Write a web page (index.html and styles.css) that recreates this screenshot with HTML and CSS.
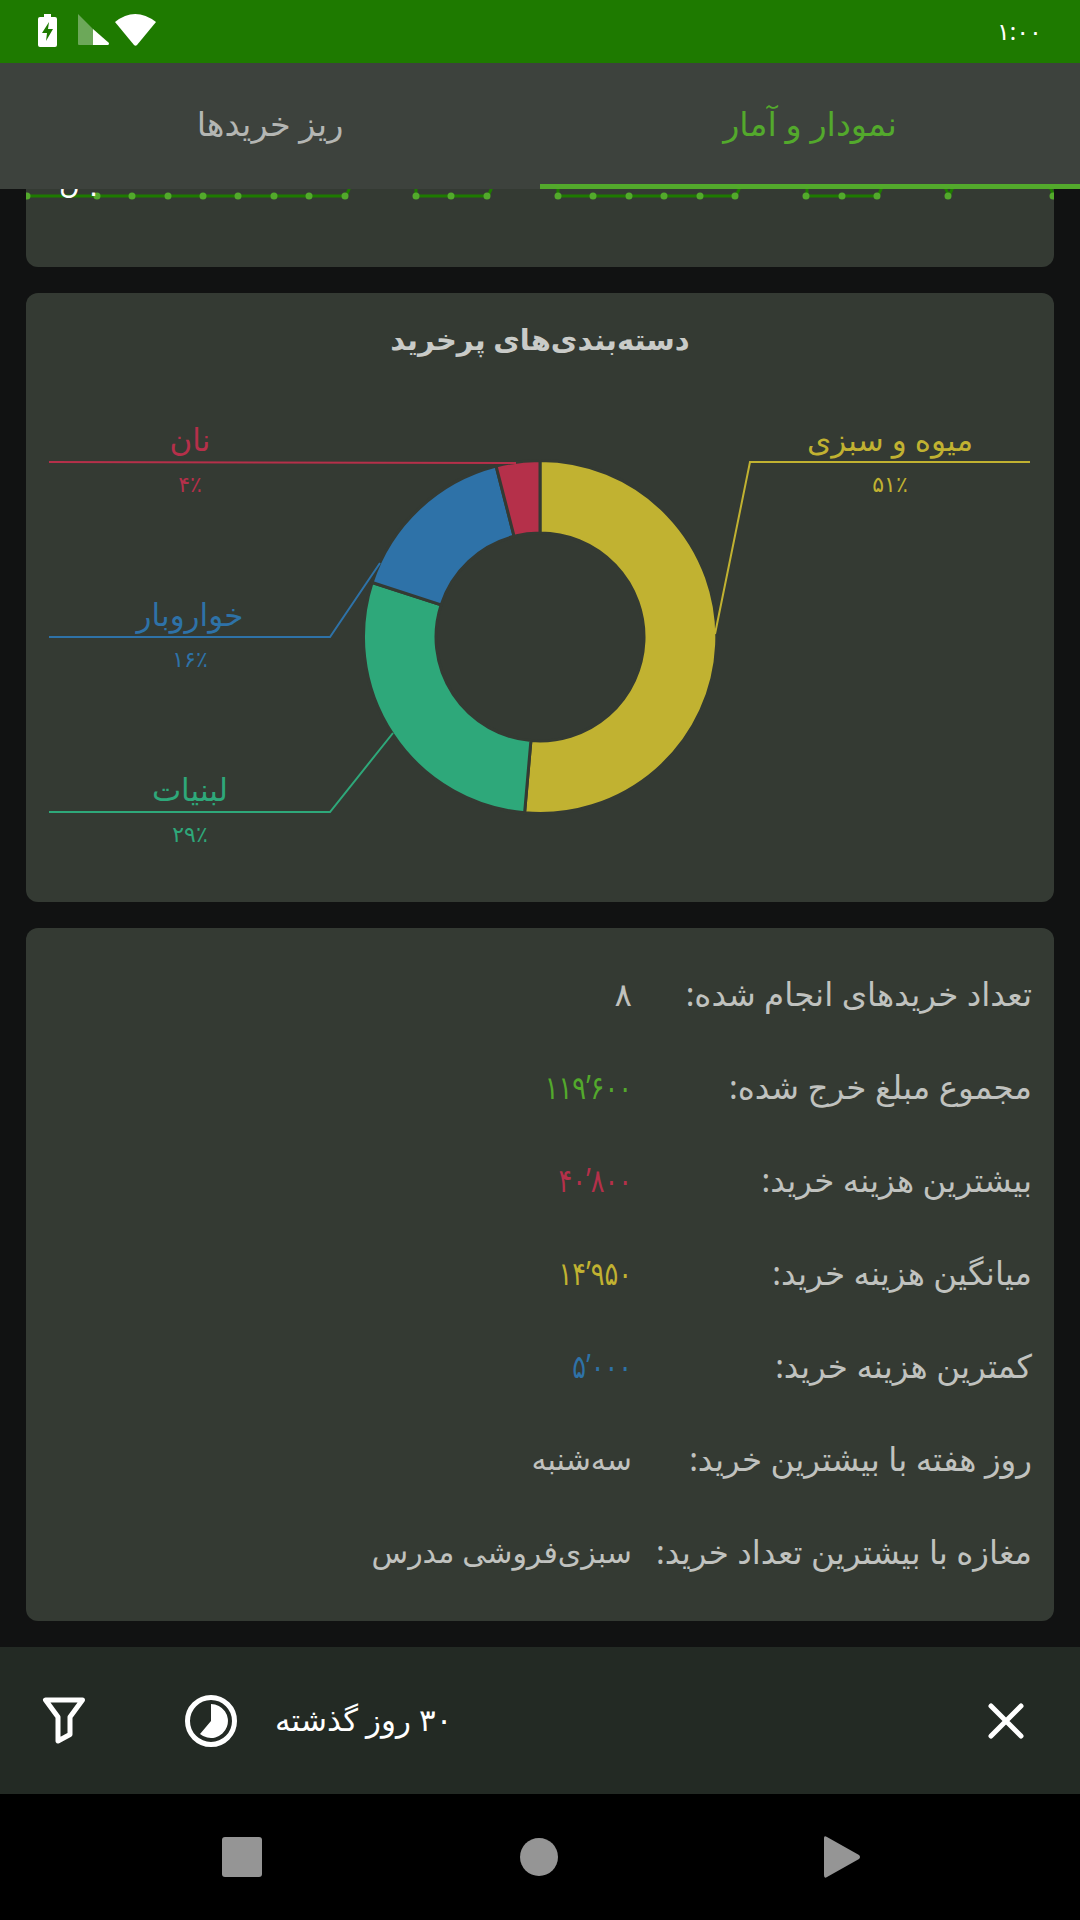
FILE: index.html
```html
<!DOCTYPE html>
<html lang="fa">

<head>
    <meta charset="UTF-8">
    <title>نمودار و آمار</title>
    <link rel="stylesheet" href="styles.css">
</head>

<body>
    <div class="status">
        <div class="status-icons">
            <svg width="19" height="33" viewBox="0 0 19 33">
                <path fill="#fff" d="M6 0h7v3h4q2 0 2 2v26q0 2-2 2H2q-2 0-2-2V5q0-2 2-2h4z" />
                <path fill="#1e7a00" d="M11 8 4 19h5l-1 8 7-12h-5z" />
            </svg>
            <svg width="31" height="31" viewBox="0 0 31 31">
                <path fill="#fff" opacity=".35" d="M0 0 15 15V31H1q-1 0-1-1z" />
                <path fill="#fff" d="M15 15 31 29q0 2-1 2H15z" />
            </svg>
            <svg width="41" height="32" viewBox="0 0 41 32">
                <path fill="#fff" d="M0 8Q20-8 41 8L22 31q-1.500 1.500-3 0z" />
            </svg>
        </div>
        <span class="clock">۱:۰۰</span>
    </div>

    <div class="tabs">
        <div class="tab">ریز خریدها</div>
        <div class="tab tab-on">نمودار و آمار</div>
    </div>

    <div class="main">
        <div class="card card-top">
            <svg class="trend" width="1028" height="20" viewBox="0 0 1028 20">
                <path class="trend-line" d="M0 7H320M320 7 325-4M390-4 390 7H462L462 7 467-4M532-4 532 7H710L715-4M781-4 781 7H852L857-4M918-4 923 7 928-4M1023-4 1028 7" />
                <g class="trend-dots">
                    <circle cx="1" cy="7" r="3.500" /><circle cx="71" cy="7" r="3.500" /><circle cx="106" cy="7" r="3.500" />
                    <circle cx="142" cy="7" r="3.500" /><circle cx="177" cy="7" r="3.500" /><circle cx="212" cy="7" r="3.500" />
                    <circle cx="248" cy="7" r="3.500" /><circle cx="283" cy="7" r="3.500" /><circle cx="319" cy="7" r="3.500" />
                    <circle cx="390" cy="7" r="3.500" /><circle cx="425" cy="7" r="3.500" /><circle cx="461" cy="7" r="3.500" />
                    <circle cx="532" cy="7" r="3.500" /><circle cx="567" cy="7" r="3.500" /><circle cx="603" cy="7" r="3.500" />
                    <circle cx="638" cy="7" r="3.500" /><circle cx="674" cy="7" r="3.500" /><circle cx="709" cy="7" r="3.500" />
                    <circle cx="780" cy="7" r="3.500" /><circle cx="816" cy="7" r="3.500" /><circle cx="851" cy="7" r="3.500" />
                    <circle cx="922" cy="7" r="3.500" /><circle cx="1027" cy="7" r="3.500" />
                </g>
                <text class="trend-label" x="33" y="4">ن</text>
                <text class="trend-label" x="60" y="13">۰</text>
            </svg>
        </div>

        <div class="card card-chart">
            <h2 class="card-title">دسته‌بندی‌های پرخرید</h2>
            <svg class="donut" width="1028" height="530" viewBox="0 0 1028 530">
                <path class="slice yellow" d="M514 88.500A176.500 176.500 0 1 1 498.600 440.800L504.900 368.600A104 104 0 1 0 514 161Z" />
                <path class="slice green" d="M498.600 440.800A176.500 176.500 0 0 1 346.100 210.500L415.100 232.900A104 104 0 0 0 504.900 368.600Z" />
                <path class="slice blue" d="M346.100 210.500A176.500 176.500 0 0 1 470.100 94L488.100 164.300A104 104 0 0 0 415.100 232.900Z" />
                <path class="slice red" d="M470.100 94A176.500 176.500 0 0 1 514 88.500V161A104 104 0 0 0 488.100 164.300Z" />

                <path class="lead yellow-line" d="M1004 90H724L689 262" />
                <path class="lead red-line" d="M23 90 490 91" />
                <path class="lead blue-line" d="M23 265H304L354 191" />
                <path class="lead green-line" d="M23 440H304L367 361" />

                <text class="name yellow-text" x="864" y="79">میوه و سبزی</text>
                <text class="pct yellow-text" x="864" y="120">۵۱٪</text>
                <text class="name red-text" x="164" y="79">نان</text>
                <text class="pct red-text" x="164" y="120">۴٪</text>
                <text class="name blue-text" x="164" y="254">خواروبار</text>
                <text class="pct blue-text" x="164" y="295">۱۶٪</text>
                <text class="name green-text" x="164" y="429">لبنیات</text>
                <text class="pct green-text" x="164" y="470">۲۹٪</text>
            </svg>
        </div>

        <div class="card card-stats">
            <div class="row"><span>تعداد خریدهای انجام شده:</span><span>۸</span></div>
            <div class="row"><span>مجموع مبلغ خرج شده:</span><span class="num val-green">۱۱۹’۶۰۰</span></div>
            <div class="row"><span>بیشترین هزینه خرید:</span><span class="num val-red">۴۰’۸۰۰</span></div>
            <div class="row"><span>میانگین هزینه خرید:</span><span class="num val-yellow">۱۴’۹۵۰</span></div>
            <div class="row"><span>کمترین هزینه خرید:</span><span class="num val-blue">۵’۰۰۰</span></div>
            <div class="row"><span>روز هفته با بیشترین خرید:</span><span class="word">سه‌شنبه</span></div>
            <div class="row"><span>مغازه با بیشترین تعداد خرید:</span><span class="word">سبزی‌فروشی مدرس</span></div>
        </div>
    </div>

    <div class="filter-bar">
        <svg class="ic-filter" width="44" height="48" viewBox="0 0 44 48">
            <path d="M3.500 3H40.500L28 20V37.500L16 44V20Z" />
        </svg>
        <svg class="ic-range" width="52" height="52" viewBox="0 0 52 52">
            <circle cx="26" cy="26" r="23.500" fill="none" stroke="#fff" stroke-width="5" />
            <path fill="#fff" d="M26 9A17 17 0 1 1 15 39L26 26Z" />
        </svg>
        <span class="range-text">۳۰ روز گذشته</span>
        <svg class="ic-close" width="36" height="36" viewBox="0 0 36 36">
            <path d="M3 3 33 33M33 3 3 33" />
        </svg>
    </div>

    <div class="nav">
        <div class="nav-square"></div>
        <div class="nav-circle"></div>
        <svg class="nav-back" width="37" height="42" viewBox="0 0 37 42">
            <path fill="#959595" d="M0 2Q0-1 3 1L35 19q2 2 0 4L3 41q-3 2-3-2z" />
        </svg>
    </div>
</body>

</html>
```

FILE: styles.css
```css
* {
    box-sizing: border-box;
}

body {
    margin: 0;
    width: 1080px;
    height: 1920px;
    overflow: hidden;
    display: flex;
    flex-direction: column;
    background-color: #111212;
    font-family: "Noto Sans", "DejaVu Sans", sans-serif;
    color: #c9cbc8;
}

.status {
    height: 63px;
    padding: 14px 38px 0 38px;
    display: flex;
    justify-content: space-between;
    background-color: #1e7a00;
}

.status-icons {
    display: flex;
    align-items: flex-start;
    gap: 21px;
}

.status-icons svg + svg + svg {
    margin-left: -15px;
}

.clock {
    color: #fff;
    font-size: 24px;
    line-height: 34px;
}

.tabs {
    height: 126px;
    display: flex;
    background-color: #3d423d;
    position: relative;
    z-index: 2;
}

.tab {
    flex: 1;
    display: flex;
    align-items: center;
    justify-content: center;
    padding-bottom: 7px;
    font-size: 33.500px;
    color: #b4b6b3;
}

.tab-on {
    color: #53a92c;
    border-bottom: 5px solid #53a92c;
    padding-bottom: 2px;
}

.main {
    flex: 1;
    padding: 0 26px;
    display: flex;
    flex-direction: column;
    gap: 26px;
}

.card {
    width: 1028px;
    background-color: #343a33;
    border-radius: 12px;
}

.card-top {
    height: 78px;
    border-radius: 0 0 12px 12px;
    overflow: hidden;
}

.trend {
    display: block;
}

.trend-label {
    fill: #fff;
    font-size: 28px;
}

.trend-line {
    fill: none;
    stroke: #1e7a00;
    stroke-width: 3;
}

.trend-dots {
    fill: #53a92c;
}

.card-chart {
    height: 609px;
    direction: rtl;
}

.card-title {
    margin: 0;
    height: 79px;
    line-height: 92px;
    text-align: center;
    font-size: 29px;
    font-weight: bold;
    color: #c9cbc8;
}

.donut {
    display: block;
    direction: ltr;
}

.lead {
    fill: none;
    stroke-width: 2;
}

.slice {
    stroke: #343a33;
    stroke-width: 3;
}

.yellow { fill: #c1b231; }
.green { fill: #2ea87a; }
.blue { fill: #2e72a8; }
.red { fill: #b5304a; }

.yellow-line { stroke: #c1b231; }
.green-line { stroke: #2ea87a; }
.blue-line { stroke: #2e72a8; }
.red-line { stroke: #b5304a; }

.yellow-text { fill: #c1b231; }
.green-text { fill: #2ea87a; }
.blue-text { fill: #2e72a8; }
.red-text { fill: #b5304a; }

.name {
    font-size: 31px;
    text-anchor: middle;
}

.pct {
    font-size: 22px;
    text-anchor: middle;
}

.card-stats {
    height: 693px;
    padding: 19px 22px 23px;
    direction: rtl;
}

.row {
    height: 93px;
    display: grid;
    grid-template-columns: 400px 1fr;
    align-items: center;
    font-size: 32.500px;
    color: #c0c2bf;
}

.num {
    direction: ltr;
    text-align: right;
    transform: scaleX(.79);
    transform-origin: right center;
}

.word {
    font-size: 30px;
}

.val-green { color: #53a92c; }
.val-red { color: #b5304a; }
.val-yellow { color: #c1b231; }
.val-blue { color: #2e72a8; }

.filter-bar {
    height: 147px;
    flex-shrink: 0;
    padding: 0 56px 0 42px;
    display: flex;
    align-items: center;
    background-color: #232a24;
}

.ic-filter path {
    fill: none;
    stroke: #fff;
    stroke-width: 5;
    stroke-linejoin: round;
}

.ic-range {
    margin-left: 99px;
}

.range-text {
    margin-left: 38px;
    margin-right: auto;
    margin-bottom: 4px;
    direction: rtl;
    font-size: 31px;
    color: #fff;
}

.ic-close path {
    fill: none;
    stroke: #fff;
    stroke-width: 5;
    stroke-linecap: round;
}

.nav {
    height: 126px;
    flex-shrink: 0;
    padding-left: 222px;
    display: flex;
    align-items: center;
    gap: 258px;
    background-color: #000;
}

.nav-square {
    width: 40px;
    height: 40px;
    border-radius: 3px;
    background-color: #959595;
}

.nav-circle {
    width: 38px;
    height: 38px;
    border-radius: 50%;
    background-color: #959595;
}

.nav-back {
    margin-left: 8px;
}
```
